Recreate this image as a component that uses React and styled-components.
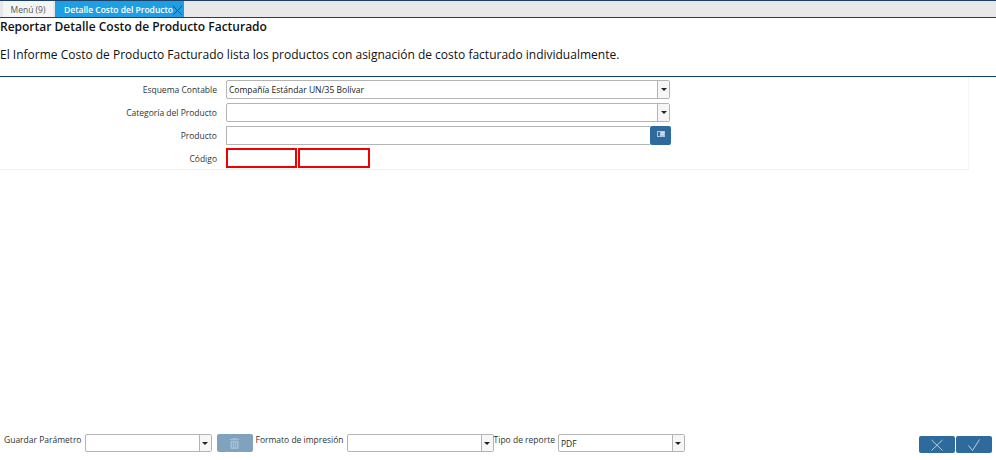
import React from "react";
import styled, { createGlobalStyle } from "styled-components";
import { FaTrashAlt } from "react-icons/fa";

const GlobalStyle = createGlobalStyle`
  html, body {
    margin: 0;
    padding: 0;
    background: #ffffff;
  }
  * {
    box-sizing: border-box;
  }
`;

const App = () => {
  return (
    <Main>
      <GlobalStyle />
      <TabBar>
        <Tab>Menú (9)</Tab>
        <ActiveTab>
          Detalle Costo del Producto
          <CloseIcon viewBox="0 0 12 12">
            <path d="M1 1 L11 11 M11 1 L1 11" />
          </CloseIcon>
        </ActiveTab>
      </TabBar>
      <Header>
        <Title>Reportar Detalle Costo de Producto Facturado</Title>
        <Description>
          El Informe Costo de Producto Facturado lista los productos con asignación de costo facturado individualmente.
        </Description>
      </Header>
      <Form>
        <Row>
          <Label>Esquema Contable</Label>
          <SelectBox width={444}>
            <Value>Compañía Estándar UN/35 Bolívar</Value>
            <Arrow />
          </SelectBox>
        </Row>
        <Row>
          <Label>Categoría del Producto</Label>
          <SelectBox width={444}>
            <Value />
            <Arrow />
          </SelectBox>
        </Row>
        <Row>
          <Label>Producto</Label>
          <SearchField />
          <SearchButton>
            <svg width="8" height="7" viewBox="0 0 8 7">
              <rect x="0" y="0" width="8" height="6" fill="#a9c6e0" />
              <rect x="1" y="1" width="2" height="4" fill="#3a6f9e" />
              <rect x="4" y="1" width="3" height="1" fill="#dfe9f3" />
              <rect x="4" y="3" width="3" height="1" fill="#dfe9f3" />
            </svg>
          </SearchButton>
        </Row>
        <Row>
          <Label>Código</Label>
          <RedField width={71} />
          <RedField width={72} />
        </Row>
      </Form>
      <Spacer />
      <Footer>
        <FooterLabel>Guardar Parámetro</FooterLabel>
        <SelectBox width={127} tall>
          <Value />
          <Arrow />
        </SelectBox>
        <TrashButton>
          <FaTrashAlt size={11} color="#a5bdd2" />
        </TrashButton>
        <FooterLabel>Formato de impresión</FooterLabel>
        <SelectBox width={147} tall>
          <Value />
          <Arrow />
        </SelectBox>
        <FooterLabel>Tipo de reporte</FooterLabel>
        <SelectBox width={127} tall>
          <Value>PDF</Value>
          <Arrow />
        </SelectBox>
        <Actions>
          <ActionButton>
            <svg width="14" height="14" viewBox="0 0 14 14" fill="none" stroke="#b9cfe2" strokeWidth="1">
              <path d="M1.5 2 L12.5 12.5 M12.5 2 L1.5 12.5" />
            </svg>
          </ActionButton>
          <ActionButton>
            <svg width="14" height="14" viewBox="0 0 14 14" fill="none" stroke="#b9cfe2" strokeWidth="1">
              <path d="M1.5 7.5 L5.5 12.5 L12.5 1.5" />
            </svg>
          </ActionButton>
        </Actions>
      </Footer>
    </Main>
  );
};

const Main = styled.div`
  width: 996px;
  height: 460px;
  display: flex;
  flex-direction: column;
  overflow: hidden;
  font-family: "Open Sans", "Noto Sans", sans-serif;
  color: #333333;
`;

const TabBar = styled.div`
  height: 18px;
  flex: none;
  display: flex;
  align-items: stretch;
  gap: 1px;
  padding-left: 3px;
  background: #e8e8e8;
  border-top: 1px solid #1c3f66;
  border-bottom: 1px solid #1c3f66;
`;

const Tab = styled.div`
  width: 50px;
  display: flex;
  align-items: center;
  justify-content: center;
  background: #f5f5f5;
  font-size: 8.5px;
  color: #555555;
`;

const ActiveTab = styled.div`
  width: 129px;
  display: flex;
  align-items: center;
  padding-left: 9px;
  margin-left: 1px;
  position: relative;
  background: #1e9fe3;
  font-size: 8.5px;
  font-weight: 600;
  color: #ffffff;
`;

const CloseIcon = styled.svg`
  position: absolute;
  right: 1px;
  top: 4px;
  width: 11px;
  height: 11px;
  fill: none;
  stroke: #1c3f66;
  stroke-width: 1;
`;

const Header = styled.div`
  flex: none;
  height: 59px;
  border-bottom: 1px solid #0f3f6b;
  color: #111111;
`;

const Title = styled.div`
  font-size: 12px;
  font-weight: 600;
  line-height: 16px;
  margin-top: 1px;
  white-space: nowrap;
`;

const Description = styled.div`
  font-size: 12px;
  line-height: 16px;
  margin-top: 12px;
  white-space: nowrap;
`;

const Form = styled.div`
  flex: none;
  width: 969px;
  height: 93px;
  padding-top: 2px;
  display: flex;
  flex-direction: column;
  gap: 3px;
  border-right: 1px solid #f4f4f4;
  border-bottom: 1px solid #f0f0f0;
`;

const Row = styled.div`
  height: 20px;
  display: flex;
  align-items: center;
`;

const Label = styled.div`
  width: 217px;
  margin-right: 9px;
  text-align: right;
  font-size: 8.5px;
  color: #333333;
`;

const SelectBox = styled.div`
  width: ${(props) => props.width}px;
  height: ${(props) => (props.tall ? 18 : 19)}px;
  flex: none;
  display: flex;
  border: 1px solid #b4b4b4;
  border-radius: 2px;
  background: #ffffff;
`;

const Value = styled.div`
  flex: 1;
  padding-left: 2px;
  display: flex;
  align-items: center;
  font-size: 8.5px;
  color: #222222;
`;

const Arrow = styled.div`
  width: 12px;
  flex: none;
  display: flex;
  align-items: center;
  justify-content: center;
  background: #f6f6f6;
  border-left: 1px solid #b4b4b4;

  &::after {
    content: "";
    width: 0;
    height: 0;
    border-left: 3px solid transparent;
    border-right: 3px solid transparent;
    border-top: 3px solid #222222;
  }
`;

const SearchField = styled.div`
  width: 424px;
  height: 19px;
  flex: none;
  border: 1px solid #b4b4b4;
  border-right: none;
`;

const SearchButton = styled.div`
  width: 21px;
  height: 19px;
  flex: none;
  display: flex;
  align-items: center;
  justify-content: center;
  padding-bottom: 2px;
  background: #2f6a9c;
  border-radius: 2px;
`;

const RedField = styled.div`
  width: ${(props) => props.width}px;
  height: 20px;
  flex: none;
  margin-right: 1px;
  border: 2px solid #f00000;
`;

const Spacer = styled.div`
  flex: 1;
`;

const Footer = styled.div`
  flex: none;
  height: 24px;
  padding-left: 4px;
  padding-right: 4px;
  margin-bottom: 2px;
  display: flex;
  align-items: flex-start;
`;

const FooterLabel = styled.div`
  font-size: 8.5px;
  line-height: 12px;
  margin-right: 3px;
  white-space: nowrap;
  color: #333333;
`;

const TrashButton = styled.div`
  width: 36px;
  height: 18px;
  margin-left: 5px;
  margin-right: 3px;
  flex: none;
  display: flex;
  align-items: center;
  justify-content: center;
  background: #7fa2bf;
  border-radius: 2px;
`;

const Actions = styled.div`
  margin-left: auto;
  display: flex;
  gap: 1px;
  margin-top: 2px;
`;

const ActionButton = styled.div`
  width: 36px;
  height: 17px;
  display: flex;
  align-items: center;
  justify-content: center;
  background: #2f6a9c;
  border-radius: 2px;
`;

export default App;
